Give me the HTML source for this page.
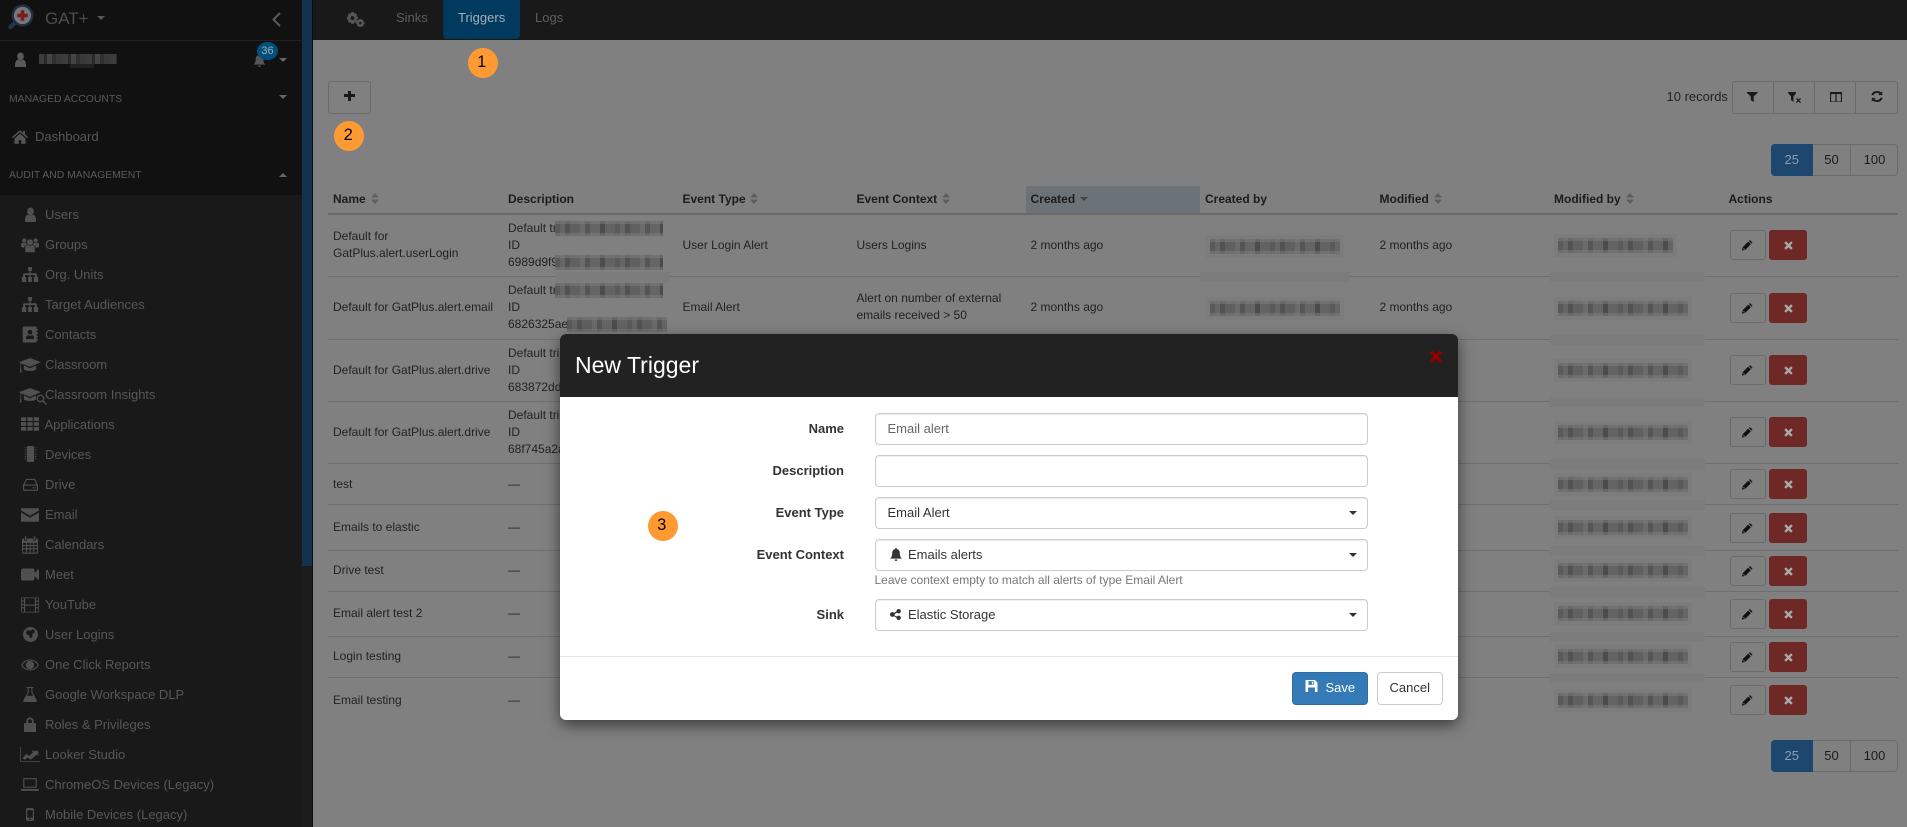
<!DOCTYPE html>
<html lang="en"><head><meta charset="utf-8"><title>Triggers</title>
<style>
*{box-sizing:border-box}
html,body{margin:0;padding:0;width:1907px;height:827px;overflow:hidden;background:#808080;font-family:"Liberation Sans",Arial,sans-serif;font-size:13px;color:#222}
.a,.t{position:absolute}
.t{white-space:nowrap;line-height:16px;height:16px}
svg{position:absolute;display:block}
.nav{left:45px;color:#575757}
.sec{left:9px;color:#5a5a5a;font-size:10.4px}
.th{top:191px;font-weight:bold;color:#1c1c1c;font-size:12px}
.c{color:#222;font-size:12px}
.ctrl{position:absolute;left:874.5px;width:493px;height:32px;background:#fff;border:1px solid #ccc;border-radius:4px;box-shadow:inset 0 1px 1px rgba(0,0,0,.075)}
.lb{right:1063px;font-weight:bold;color:#333}
.ft{left:887.5px;color:#333}
.car{position:absolute;width:0;height:0;border-left:4px solid transparent;border-right:4px solid transparent;border-top:4px solid #333}
.btn{position:absolute;border:1px solid #6a6a6a;border-radius:3px}
.ed{left:1729.5px;width:36.5px;height:30px}
.dl{left:1769px;width:38px;height:30px;background:#6e2927;border-radius:3px;position:absolute}
.o{position:absolute;width:30px;height:30px;border-radius:50%;background:#ff9a33;color:#000;font-size:16.5px;line-height:29px;text-align:center;padding-right:1.5px}
.bl{position:absolute;height:15px;box-shadow:0 0 0 4px #7c7c7c;background:linear-gradient(180deg,rgba(124,124,124,.55) 0 3px,transparent 3px 12px,rgba(124,124,124,.55) 12px),repeating-linear-gradient(90deg,#5a5a5a 0 5px,#666 5px 10px,#525252 10px 15px,#606060 15px 25px,#6b6b6b 25px 30px,#555 30px 35px,#656565 35px 45px,#4c4c4c 45px 50px,#636363 50px 60px)}
.ln{position:absolute;left:328px;width:1570px;height:1px;background:#6e6e6e}
.pt{position:absolute;background:#7c7c7c;height:10px}
.pg{position:absolute;border:1px solid #6a6a6a;border-radius:4px;left:1771px;width:127px;height:32px;color:#1c1c1c}
.pg i{position:absolute;top:0;height:30px;line-height:29px;text-align:center;font-style:normal}
</style></head>
<body>
<svg width="0" height="0" style="position:absolute"><defs>
<symbol id="user" viewBox="0 0 24 24" preserveAspectRatio="none"><circle cx="12" cy="7" r="6.2"/><path d="M2 24q-1-11 6-12 4 3 8 0 7 1 6 12 0 0-20 0z"/></symbol>
<symbol id="users" viewBox="0 0 30 24"><circle cx="15" cy="7.5" r="5"/><circle cx="5.5" cy="4.5" r="3.5"/><circle cx="24.5" cy="4.5" r="3.5"/><path d="M7 24v-7q0-5 4-5 4 3 8 0 4 0 4 5v7z"/><path d="M0 15v-4q0-3 3-3 3 2 5 0 1 0 1 0 0 3 2 3-5 1-6 6zM30 15v-4q0-3-3-3-3 2-5 0h-1q0 3-2 3 5 1 6 6z"/></symbol>
<symbol id="home" viewBox="0 0 26 22"><path d="M13 0 0 11l1.500 1.800L13 3l11.500 9.800L26 11l-5-4.300V1h-3v3zM4 13.500V22h7v-6h4v6h7v-8.500L13 5.500z"/></symbol>
<symbol id="site" viewBox="0 0 26 24"><path d="M10 0h6v6h-2v4h8q2 0 2 2v4h2v8h-7v-8h2v-3h-7v3h2v8h-6v-8h2v-3H5v3h2v8H0v-8h2v-4q0-2 2-2h8V6h-2z"/></symbol>
<symbol id="contact" viewBox="0 0 24 24"><path fill-rule="evenodd" d="M3 0h17q2 0 2 2v2h2v2h-2v3h2v2h-2v3h2v2h-2v3h2v2h-2v1q0 2-2 2H3q-2 0-2-2V2q0-2 2-2zM12 5a3.500 3.500 0 1 0 .01 0zM6 19h12v-2q0-3-3-4-3 2-6 0-3 1-3 4z"/></symbol>
<symbol id="cap" viewBox="0 0 32 22"><path d="M16 0 0 6l2 1v8l-1 6h3l-1-6V8l13 5 16-7z"/><path d="M7 11v5q0 3 9 3t9-3v-5l-9 4z"/></symbol>
<symbol id="th" viewBox="0 0 24 18"><path d="M0 1q0-1 1-1h5q1 0 1 1v4H0zM8.500 0h7v5h-7zM17 0h6q1 0 1 1v4h-7zM0 6.500h7v5H0zM8.500 6.500h7v5h-7zM17 6.500h7v5h-7zM0 13h7v5H1q-1 0-1-1zM8.500 13h7v5h-7zM17 13h7v4q0 1-1 1h-6z"/></symbol>
<symbol id="chip" viewBox="0 0 16 22"><rect x="3" y="0" width="10" height="22" rx="1.500"/><path d="M0 2h2v1H0zM0 5h2v1H0zM0 8h2v1H0zM0 11h2v1H0zM0 14h2v1H0zM0 17h2v1H0zM14 2h2v1h-2zM14 5h2v1h-2zM14 8h2v1h-2zM14 11h2v1h-2zM14 14h2v1h-2zM14 17h2v1h-2z"/></symbol>
<symbol id="hdd" viewBox="0 0 20 17"><path fill-rule="evenodd" d="M4 1h12l4 8v6q0 2-2 2H2q-2 0-2-2V9zM5 2.500 2 8.500h16l-3-6zM1.500 10v4.500q0 1 1 1h15q1 0 1-1V10zM13 12h1.500v1.500H13zM15.500 12H17v1.500h-1.500z"/></symbol>
<symbol id="mail" viewBox="0 0 24 18"><path d="M1 0h22q1 0 1 1v2L12 10 0 3V1q0-1 1-1zM0 5.500l12 7 12-7V17q0 1-1 1H1q-1 0-1-1z"/></symbol>
<symbol id="cal" viewBox="0 0 22 24"><path fill-rule="evenodd" d="M4 0h2v5H4zM16 0h2v5h-2zM2 3h1v3h4V3h8v3h4V3h1q2 0 2 2v17q0 2-2 2H2q-2 0-2-2V5q0-2 2-2zM1.500 9v3h4V9zM7 9v3h3.500V9zM12 9v3h3.500V9zM17 9v3h3.500V9zM1.500 13.500v3h4v-3zM7 13.500v3h3.500v-3zM12 13.500v3h3.500v-3zM17 13.500v3h3.500v-3zM1.500 18v4.500h4V18zM7 18v4.500h3.500V18zM12 18v4.500h3.500V18zM17 18v4.500h3.500V18z"/></symbol>
<symbol id="cam" viewBox="0 0 24 16"><path d="M3 0h12q3 0 3 3v3l5-5q1 0 1 1v12q0 1-1 1l-5-5v3q0 3-3 3H3q-3 0-3-3V3q0-3 3-3z"/></symbol>
<symbol id="film" viewBox="0 0 24 20"><path fill-rule="evenodd" d="M1 0h22q1 0 1 1v18q0 1-1 1H1q-1 0-1-1V1q0-1 1-1zM1 1v3h3V1zM1 5.500v3h3v-3zM1 10v3h3v-3zM1 14.500V19h3v-4.500zM20 1v3h3V1zM20 5.500v3h3v-3zM20 10v3h3v-3zM20 14.500V19h3v-4.500zM5.500 1v8.500h13V1zM5.500 11v8h13v-8z"/></symbol>
<symbol id="globe" viewBox="0 0 20 20"><path fill-rule="evenodd" d="M10 0a10 10 0 1 0 .01 0zM6 4l3 1 4-2 3 2-1 3-3 1 1 3-2 3-2-1-1-3-3-1-1-3z"/></symbol>
<symbol id="eye" viewBox="0 0 26 16"><path fill-rule="evenodd" d="M13 0Q22 0 26 8 22 16 13 16 4 16 0 8 4 0 13 0zM13 2a6 6 0 1 0 .01 0zM13 1.500Q6 1.500 1.800 8 6 14.500 13 14.500 20 14.500 24.200 8 20 1.500 13 1.500z"/><path d="M13 3.500a4.500 4.500 0 1 0 4.500 4.500H13z"/></symbol>
<symbol id="flask" viewBox="0 0 20 22"><path fill-rule="evenodd" d="M5 0h10v1.500h-1.500V8L20 20q0 2-2 2H2q-2 0-2-2L6.500 8V1.500H5zM8 1.500V8.500L5.500 13h9L12 8.500V1.500z"/></symbol>
<symbol id="lock" viewBox="0 0 16 20"><path fill-rule="evenodd" d="M3 8V5.500a5 5 0 0 1 10 0V8h2q1 0 1 1v10q0 1-1 1H1q-1 0-1-1V9q0-1 1-1zM5.500 8h5V5.500a2.500 2.500 0 0 0-5 0z"/></symbol>
<symbol id="chart" viewBox="0 0 26 20"><path d="M0 0h1v19h25v1H0z"/><path d="M3 15l5-6 4 3 5-5-2-2h9v7l-2-2-8 7-4-3-4 3z"/></symbol>
<symbol id="lap" viewBox="0 0 24 17"><path fill-rule="evenodd" d="M4 0h16q1 0 1 1v12H3V1q0-1 1-1zM4.500 1.500v10h15v-10zM0 14.500h24V15q0 2-2 2H2q-2 0-2-2z"/></symbol>
<symbol id="mob" viewBox="0 0 10 16"><path fill-rule="evenodd" d="M2 0h6q2 0 2 2v12q0 2-2 2H2q-2 0-2-2V2q0-2 2-2zM1.500 2.500v9.500h7V2.500zM4 13v1.500h2V13z"/></symbol>
<symbol id="bell" viewBox="0 0 20 22"><path d="M10 0q1.500 0 1.500 2 5 1 5 7 0 6 3.500 9H0q3.500-3 3.500-9 0-6 5-7Q8.500 0 10 0zM7.500 19.500h5q0 2.500-2.500 2.500t-2.500-2.500z"/></symbol>
<symbol id="cogs" viewBox="0 0 30 24"><path fill-rule="evenodd" d="M9 0h4l.6 2.500 2-.8 2.800 2.800-1.200 2.200 2.400 1v4l-2.400.8 1.200 2.200-2.800 2.800-2-1.200-.6 2.700H9l-.8-2.700-2 1.200-2.800-2.800 1.200-2.200L2 11.700v-4l2.600-1-1.200-2.200 2.800-2.800 2 .8zM11 6.500a3.200 3.200 0 1 0 .01 0z"/><path fill-rule="evenodd" d="M22 11h3l.4 1.700 1.600-.6 2 2-.9 1.500 1.900.6v3l-1.900.6.900 1.500-2 2-1.600-.9-.4 1.600h-3l-.5-1.600-1.500.9-2-2 .9-1.500-1.900-.6v-3l1.900-.6-.9-1.500 2-2 1.500.6zM23.500 15.700a2 2 0 1 0 .01 0z"/></symbol>
<symbol id="filter" viewBox="0 0 14 16" preserveAspectRatio="none"><path d="M0 0h14v1.500L9 7v9l-4-3V7L0 1.500z"/></symbol>
<symbol id="col" viewBox="0 0 16 16" preserveAspectRatio="none"><path fill-rule="evenodd" d="M1 0h14q1 0 1 1v14q0 1-1 1H1q-1 0-1-1V1q0-1 1-1zM1.500 3v11.500h5.700V3zM8.800 3v11.500h5.700V3z"/></symbol>
<symbol id="ref" viewBox="0 0 16 16" preserveAspectRatio="none"><path d="M8 0q3.300 0 5.500 2L15 .500V6h-5.500l1.800-1.800Q9.800 2.800 8 2.800 4.500 2.800 3.300 6.300L.5 6Q2 0 8 0zM1 10h5.500l-1.800 1.800q1.500 1.400 3.300 1.400 3.500 0 4.700-3.500l2.800.3Q14 16 8 16q-3.300 0-5.500-2L1 15.500z"/></symbol>
<symbol id="pen" viewBox="0 0 16 16"><path d="M12 0l4 4-1.500 1.500-4-4zM9.500 2.500l4 4L5 15H4v-2H2v-1H1v-1zM0.500 12 0 16l4-.5z"/></symbol>
<symbol id="x" viewBox="0 0 16 16"><path d="M3.500 0.500 8 5l4.500-4.500 3 3L11 8l4.500 4.500-3 3L8 11l-4.500 4.500-3-3L5 8 .5 3.500z"/></symbol>
<symbol id="sv" viewBox="0 0 16 16"><path fill-rule="evenodd" d="M1 0h11.500L16 3.500V15q0 1-1 1H1q-1 0-1-1V1q0-1 1-1zM4 1.500v5h7.500v-5zM8.500 2.200h2v3.500h-2zM3.500 10v6h9v-6z"/></symbol>
<symbol id="share" viewBox="0 0 14 14"><circle cx="11" cy="2.800" r="2.800"/><circle cx="11" cy="11.200" r="2.800"/><circle cx="3" cy="7" r="3"/><path d="M3 6 10 2l1 1.500L4 7.500l7 3-1 1.500L3 8z"/></symbol>
</defs></svg>

<!-- sidebar -->
<div class="a" style="left:0;top:0;width:302px;height:195px;background:#111"></div>
<div class="a" style="left:0;top:195px;width:302px;height:632px;background:#191919"></div>
<div class="a" style="left:0;top:40px;width:302px;height:1px;background:#222"></div>
<div class="a" style="left:302px;top:0;width:10px;height:566px;background:#14314f"></div>
<div class="a" style="left:302px;top:566px;width:10px;height:261px;background:#1c1c1c"></div>
<div class="a" style="left:312px;top:0;width:1px;height:827px;background:#0c0c0c"></div>

<svg style="left:8px;top:4px" width="27" height="26" viewBox="0 0 27 26"><path d="M8 18 2.500 23" stroke="#20344a" stroke-width="4.500" stroke-linecap="round"/><circle cx="14.500" cy="11.500" r="9.800" fill="#777" stroke="#1d3048" stroke-width="2.400"/><path d="M12.700 6.200h3.600v3.500h3.500v3.600h-3.500v3.500h-3.600v-3.500H9.200V9.700h3.500z" fill="#7a1a22"/></svg>
<div class="t" style="left:45px;top:9px;font-size:17px;line-height:20px;height:20px;color:#4d4d4d">GAT+</div>
<div class="car" style="left:97px;top:16px;border-top-color:#555"></div>
<svg style="left:272px;top:12px" width="9" height="15" viewBox="0 0 9 15"><path d="M8 1 1.500 7.500 8 14" fill="none" stroke="#5a5a5a" stroke-width="2"/></svg>
<svg style="left:14px;top:52px;fill:#5a5a5a" width="13" height="15"><use href="#user"/></svg>
<div class="a" style="left:39px;top:54px;width:78px;height:10px;background:repeating-linear-gradient(90deg,#3c3c3c 0 5px,#2a2a2a 5px 8px,#444 8px 13px,#303030 13px 17px,#3a3a3a 17px 24px)"></div>
<div class="a" style="left:70px;top:64px;width:24px;height:4px;background:#222"></div>
<svg style="left:253px;top:54px;fill:#555" width="13" height="13"><use href="#bell"/></svg>
<div class="a" style="left:257px;top:42px;width:21px;height:18px;border-radius:50%;background:#00507f;color:#a9a9a9;font-size:11px;line-height:18px;text-align:center">36</div>
<div class="car" style="left:279px;top:58px;border-top-color:#666"></div>
<div class="t sec" style="top:92px">MANAGED ACCOUNTS</div>
<div class="car" style="left:279px;top:95px;border-top-color:#666"></div>
<svg style="left:12px;top:130px;fill:#555" width="16" height="14"><use href="#home"/></svg>
<div class="t nav" style="left:35px;top:129px">Dashboard</div>
<div class="t sec" style="top:168px">AUDIT AND MANAGEMENT</div>
<div class="car" style="left:279px;top:173px;border-top:0;border-bottom:4px solid #666"></div>

<svg style="left:24px;top:207px;fill:#505050" width="13" height="15"><use href="#user"/></svg><div class="t nav" style="top:207px">Users</div>
<svg style="left:21px;top:237px;fill:#505050" width="18" height="16"><use href="#users"/></svg><div class="t nav" style="top:237px">Groups</div>
<svg style="left:21px;top:267px;fill:#505050" width="18" height="15"><use href="#site"/></svg><div class="t nav" style="top:267px">Org. Units</div>
<svg style="left:21px;top:297px;fill:#505050" width="18" height="15"><use href="#site"/></svg><div class="t nav" style="top:297px">Target Audiences</div>
<svg style="left:22px;top:326px;fill:#505050" width="16" height="17"><use href="#contact"/></svg><div class="t nav" style="top:327px">Contacts</div>
<svg style="left:19px;top:358px;fill:#505050" width="22" height="15"><use href="#cap"/></svg><div class="t nav" style="top:357px">Classroom</div>
<svg style="left:19px;top:388px;fill:#505050" width="22" height="15"><use href="#cap"/></svg>
<svg style="left:36px;top:394px" width="11" height="11" viewBox="0 0 11 11"><circle cx="4.500" cy="4.500" r="3.200" fill="#191919" stroke="#505050" stroke-width="1.300"/><path d="M7 7l3.500 3.500" stroke="#505050" stroke-width="1.400"/></svg>
<div class="t nav" style="top:387px">Classroom Insights</div>
<svg style="left:21px;top:417px;fill:#505050" width="18" height="14"><use href="#th"/></svg><div class="t nav" style="left:44.500px;top:417px">Applications</div>
<svg style="left:23px;top:446px;fill:#505050" width="15" height="16"><use href="#chip"/></svg><div class="t nav" style="top:447px">Devices</div>
<svg style="left:23px;top:478px;fill:#505050" width="15" height="13"><use href="#hdd"/></svg><div class="t nav" style="top:477px">Drive</div>
<svg style="left:21px;top:508px;fill:#505050" width="18" height="14"><use href="#mail"/></svg><div class="t nav" style="top:507px">Email</div>
<svg style="left:22px;top:536px;fill:#505050" width="16" height="18"><use href="#cal"/></svg><div class="t nav" style="top:537px">Calendars</div>
<svg style="left:21px;top:568px;fill:#505050" width="18" height="13"><use href="#cam"/></svg><div class="t nav" style="top:567px">Meet</div>
<svg style="left:21px;top:597px;fill:#505050" width="18" height="16"><use href="#film"/></svg><div class="t nav" style="top:597px">YouTube</div>
<svg style="left:23px;top:627px;fill:#505050" width="15" height="15"><use href="#globe"/></svg><div class="t nav" style="top:627px">User Logins</div>
<svg style="left:21px;top:659px;fill:#505050" width="18" height="12"><use href="#eye"/></svg><div class="t nav" style="top:657px">One Click Reports</div>
<svg style="left:23px;top:687px;fill:#505050" width="14" height="15"><use href="#flask"/></svg><div class="t nav" style="top:687px">Google Workspace DLP</div>
<svg style="left:24px;top:717px;fill:#505050" width="12" height="15"><use href="#lock"/></svg><div class="t nav" style="top:717px">Roles &amp; Privileges</div>
<svg style="left:20px;top:747px;fill:#505050" width="20" height="15"><use href="#chart"/></svg><div class="t nav" style="top:747px">Looker Studio</div>
<svg style="left:21px;top:778px;fill:#505050" width="18" height="13"><use href="#lap"/></svg><div class="t nav" style="top:777px">ChromeOS Devices (Legacy)</div>
<svg style="left:26px;top:808px;fill:#505050" width="8" height="13"><use href="#mob"/></svg><div class="t nav" style="top:807px">Mobile Devices (Legacy)</div>

<!-- top bar -->
<div class="a" style="left:313px;top:0;width:1594px;height:40px;background:#191919"></div>
<svg style="left:345px;top:12px;fill:#555" width="20" height="15"><use href="#cogs"/></svg>
<div class="t" style="left:396px;top:10px;color:#5f5f5f">Sinks</div>
<div class="a" style="left:443px;top:0;width:77px;height:39px;background:#003a5f;border-radius:0 0 4px 4px"></div>
<div class="t" style="left:458px;top:10px;color:#a3aeb8">Triggers</div>
<div class="t" style="left:535px;top:10px;color:#5f5f5f">Logs</div>

<!-- toolbar -->
<div class="btn" style="left:328px;top:81px;width:43px;height:33px"></div>
<div class="a" style="left:344px;top:94.250px;width:11px;height:2.500px;background:#1a1a1a"></div>
<div class="a" style="left:348.250px;top:90.500px;width:2.500px;height:10px;background:#1a1a1a"></div>
<div class="t" style="left:1666.500px;top:89px;color:#222">10 records</div>
<div class="btn" style="left:1731.500px;top:81px;width:166px;height:33px;border-color:#6a6a6a"></div>
<div class="a" style="left:1773px;top:82px;width:1px;height:31px;background:#6a6a6a"></div>
<div class="a" style="left:1814px;top:82px;width:1px;height:31px;background:#6a6a6a"></div>
<div class="a" style="left:1855px;top:82px;width:1px;height:31px;background:#6a6a6a"></div>
<svg style="left:1747px;top:92px;fill:#1a1a1a" width="10.500" height="10"><use href="#filter"/></svg>
<svg style="left:1787.500px;top:92px;fill:#1a1a1a" width="8.500" height="10"><use href="#filter"/></svg>
<svg style="left:1795.500px;top:97.500px" width="5" height="5" viewBox="0 0 6 6"><path d="M.5.5l5 5M5.500.5l-5 5" stroke="#1a1a1a" stroke-width="1.500"/></svg>
<svg style="left:1829.500px;top:91.500px;fill:#1a1a1a" width="12" height="10.500"><use href="#col"/></svg>
<svg style="left:1870.500px;top:91px;fill:#1a1a1a" width="12" height="11"><use href="#ref"/></svg>

<div class="pg" style="top:144px"><i style="left:-1px;top:-1px;width:41.500px;height:32px;line-height:31px;background:#1d476e;color:#8f9cab;border-radius:4px 0 0 4px">25</i><i style="left:41px;width:38px;border-right:1px solid #6a6a6a">50</i><i style="left:80px;width:45px">100</i></div>
<div class="pg" style="top:740px"><i style="left:-1px;top:-1px;width:41.500px;height:32px;line-height:31px;background:#1d476e;color:#8f9cab;border-radius:4px 0 0 4px">25</i><i style="left:41px;width:38px;border-right:1px solid #6a6a6a">50</i><i style="left:80px;width:45px">100</i></div>

<!-- table header -->
<div class="a" style="left:1026px;top:186px;width:174px;height:27px;background:#6c7378"></div>
<div class="t th" style="left:333px">Name</div>
<div class="t th" style="left:508px">Description</div>
<div class="t th" style="left:682.500px">Event Type</div>
<div class="t th" style="left:856.500px">Event Context</div>
<div class="t th" style="left:1030.500px">Created</div>
<div class="t th" style="left:1205px">Created by</div>
<div class="t th" style="left:1379.500px">Modified</div>
<div class="t th" style="left:1554px">Modified by</div>
<div class="t th" style="left:1728.500px">Actions</div>
<svg style="left:371px;top:193px;fill:#5e5e5e" width="8" height="11" viewBox="0 0 8 11"><path d="M4 0l4 4.500H0zM4 11l4-4.500H0z"/></svg>
<svg style="left:750px;top:193px;fill:#5e5e5e" width="8" height="11" viewBox="0 0 8 11"><path d="M4 0l4 4.500H0zM4 11l4-4.500H0z"/></svg>
<svg style="left:942px;top:193px;fill:#5e5e5e" width="8" height="11" viewBox="0 0 8 11"><path d="M4 0l4 4.500H0zM4 11l4-4.500H0z"/></svg>
<svg style="left:1434px;top:193px;fill:#5e5e5e" width="8" height="11" viewBox="0 0 8 11"><path d="M4 0l4 4.500H0zM4 11l4-4.500H0z"/></svg>
<svg style="left:1626px;top:193px;fill:#5e5e5e" width="8" height="11" viewBox="0 0 8 11"><path d="M4 0l4 4.500H0zM4 11l4-4.500H0z"/></svg>
<div class="car" style="left:1080px;top:197px;border-top-color:#444"></div>
<div class="a" style="left:328px;top:213px;width:1570px;height:2px;background:#6a6a6a"></div>

<!-- row lines -->
<div class="ln" style="top:276px"></div><div class="ln" style="top:339px"></div><div class="ln" style="top:401px"></div><div class="ln" style="top:463px"></div><div class="ln" style="top:504px"></div><div class="ln" style="top:550px"></div><div class="ln" style="top:591px"></div><div class="ln" style="top:636px"></div><div class="ln" style="top:677px"></div>
<div class="pt" style="left:1550px;top:272px;width:155px"></div><div class="pt" style="left:1550px;top:335px;width:155px"></div><div class="pt" style="left:1550px;top:397px;width:155px"></div><div class="pt" style="left:1550px;top:459px;width:155px"></div><div class="pt" style="left:1550px;top:500px;width:155px"></div><div class="pt" style="left:1550px;top:546px;width:155px"></div><div class="pt" style="left:1550px;top:587px;width:155px"></div><div class="pt" style="left:1550px;top:632px;width:155px"></div><div class="pt" style="left:1550px;top:673px;width:155px"></div>
<div class="pt" style="left:1200px;top:272px;width:150px"></div><div class="pt" style="left:555px;top:272px;width:115px"></div>

<!-- names -->
<div class="t c" style="left:333px;top:228px">Default for</div><div class="t c" style="left:333px;top:245px">GatPlus.alert.userLogin</div>
<div class="t c" style="left:333px;top:299px">Default for GatPlus.alert.email</div>
<div class="t c" style="left:333px;top:362px">Default for GatPlus.alert.drive</div>
<div class="t c" style="left:333px;top:424px">Default for GatPlus.alert.drive</div>
<div class="t c" style="left:333px;top:476px">test</div>
<div class="t c" style="left:333px;top:519px">Emails to elastic</div>
<div class="t c" style="left:333px;top:562px">Drive test</div>
<div class="t c" style="left:333px;top:605px">Email alert test 2</div>
<div class="t c" style="left:333px;top:648px">Login testing</div>
<div class="t c" style="left:333px;top:692px">Email testing</div>

<!-- descriptions -->
<div class="t c" style="left:508px;top:220px">Default tr</div><div class="t c" style="left:508px;top:237px">ID</div><div class="t c" style="left:508px;top:254px">6989d9f9</div>
<div class="bl" style="left:555px;top:221px;width:108px;box-shadow:none"></div><div class="bl" style="left:555px;top:255px;width:108px;box-shadow:none"></div>
<div class="t c" style="left:508px;top:282px">Default tr</div><div class="t c" style="left:508px;top:299px">ID</div><div class="t c" style="left:508px;top:316px">6826325ae</div>
<div class="bl" style="left:555px;top:283px;width:108px;box-shadow:none"></div><div class="bl" style="left:567px;top:317px;width:100px;box-shadow:none"></div>
<div class="t c" style="left:508px;top:345px">Default tri</div><div class="t c" style="left:508px;top:362px">ID</div><div class="t c" style="left:508px;top:379px">683872dd</div>
<div class="t c" style="left:508px;top:407px">Default tri</div><div class="t c" style="left:508px;top:424px">ID</div><div class="t c" style="left:508px;top:441px">68f745a2a</div>
<div class="t c" style="left:508px;top:476px">&mdash;</div><div class="t c" style="left:508px;top:519px">&mdash;</div><div class="t c" style="left:508px;top:562px">&mdash;</div><div class="t c" style="left:508px;top:605px">&mdash;</div><div class="t c" style="left:508px;top:648px">&mdash;</div><div class="t c" style="left:508px;top:692px">&mdash;</div>

<!-- other cells -->
<div class="t c" style="left:682.500px;top:237px">User Login Alert</div>
<div class="t c" style="left:682.500px;top:299px">Email Alert</div>
<div class="t c" style="left:856.500px;top:237px">Users Logins</div>
<div class="t c" style="left:856.500px;top:290px">Alert on number of external</div>
<div class="t c" style="left:856.500px;top:307px">emails received &gt; 50</div>
<div class="t c" style="left:1030.500px;top:237px">2 months ago</div>
<div class="t c" style="left:1030.500px;top:299px">2 months ago</div>
<div class="t c" style="left:1379.500px;top:237px">2 months ago</div>
<div class="t c" style="left:1379.500px;top:299px">2 months ago</div>
<div class="bl" style="left:1210px;top:239px;width:130px"></div>
<div class="bl" style="left:1210px;top:301px;width:130px"></div>
<div class="bl" style="left:1557.500px;top:238px;width:115.500px"></div>
<div class="bl" style="left:1557.500px;top:301px;width:130.500px"></div>
<div class="bl" style="left:1557.500px;top:363px;width:130.500px"></div>
<div class="bl" style="left:1557.500px;top:425px;width:130.500px"></div>
<div class="bl" style="left:1557.500px;top:477px;width:130.500px"></div>
<div class="bl" style="left:1557.500px;top:520px;width:130.500px"></div>
<div class="bl" style="left:1557.500px;top:563px;width:130.500px"></div>
<div class="bl" style="left:1557.500px;top:606px;width:130.500px"></div>
<div class="bl" style="left:1557.500px;top:649px;width:130.500px"></div>
<div class="bl" style="left:1557.500px;top:693px;width:130.500px"></div>

<!-- actions -->
<div class="btn ed" style="top:230px"></div><div class="dl" style="top:230px"></div><svg style="left:1742px;top:240px;fill:#111" width="10.500" height="10.500"><use href="#pen"/></svg><svg style="left:1784px;top:240.500px;fill:#aaa" width="9" height="9"><use href="#x"/></svg>
<div class="btn ed" style="top:293px"></div><div class="dl" style="top:293px"></div><svg style="left:1742px;top:303px;fill:#111" width="10.500" height="10.500"><use href="#pen"/></svg><svg style="left:1784px;top:303.500px;fill:#aaa" width="9" height="9"><use href="#x"/></svg>
<div class="btn ed" style="top:355px"></div><div class="dl" style="top:355px"></div><svg style="left:1742px;top:365px;fill:#111" width="10.500" height="10.500"><use href="#pen"/></svg><svg style="left:1784px;top:365.500px;fill:#aaa" width="9" height="9"><use href="#x"/></svg>
<div class="btn ed" style="top:417px"></div><div class="dl" style="top:417px"></div><svg style="left:1742px;top:427px;fill:#111" width="10.500" height="10.500"><use href="#pen"/></svg><svg style="left:1784px;top:427.500px;fill:#aaa" width="9" height="9"><use href="#x"/></svg>
<div class="btn ed" style="top:469px"></div><div class="dl" style="top:469px"></div><svg style="left:1742px;top:479px;fill:#111" width="10.500" height="10.500"><use href="#pen"/></svg><svg style="left:1784px;top:479.500px;fill:#aaa" width="9" height="9"><use href="#x"/></svg>
<div class="btn ed" style="top:513px"></div><div class="dl" style="top:513px"></div><svg style="left:1742px;top:523px;fill:#111" width="10.500" height="10.500"><use href="#pen"/></svg><svg style="left:1784px;top:523.500px;fill:#aaa" width="9" height="9"><use href="#x"/></svg>
<div class="btn ed" style="top:556px"></div><div class="dl" style="top:556px"></div><svg style="left:1742px;top:566px;fill:#111" width="10.500" height="10.500"><use href="#pen"/></svg><svg style="left:1784px;top:566.500px;fill:#aaa" width="9" height="9"><use href="#x"/></svg>
<div class="btn ed" style="top:599px"></div><div class="dl" style="top:599px"></div><svg style="left:1742px;top:609px;fill:#111" width="10.500" height="10.500"><use href="#pen"/></svg><svg style="left:1784px;top:609.500px;fill:#aaa" width="9" height="9"><use href="#x"/></svg>
<div class="btn ed" style="top:642px"></div><div class="dl" style="top:642px"></div><svg style="left:1742px;top:652px;fill:#111" width="10.500" height="10.500"><use href="#pen"/></svg><svg style="left:1784px;top:652.500px;fill:#aaa" width="9" height="9"><use href="#x"/></svg>
<div class="btn ed" style="top:685px"></div><div class="dl" style="top:685px"></div><svg style="left:1742px;top:695px;fill:#111" width="10.500" height="10.500"><use href="#pen"/></svg><svg style="left:1784px;top:695.500px;fill:#aaa" width="9" height="9"><use href="#x"/></svg>

<!-- modal -->
<div class="a" style="left:560px;top:334px;width:898px;height:386px;background:#fff;border-radius:6px;box-shadow:0 5px 15px rgba(0,0,0,.55)"></div>
<div class="a" style="left:560px;top:334px;width:898px;height:63px;background:#222;border-radius:6px 6px 0 0"></div>
<div class="t" style="left:575px;top:352px;font-size:23px;line-height:26px;height:26px;color:#fff">New Trigger</div>
<svg style="left:1429px;top:350px;fill:#8f0000" width="14" height="13.500"><use href="#x"/></svg>

<div class="t lb" style="top:421px">Name</div>
<div class="t lb" style="top:463px">Description</div>
<div class="t lb" style="top:505px">Event Type</div>
<div class="t lb" style="top:547px">Event Context</div>
<div class="t lb" style="top:607px">Sink</div>
<div class="ctrl" style="top:413px"></div>
<div class="ctrl" style="top:455px"></div>
<div class="ctrl" style="top:497px"></div>
<div class="ctrl" style="top:539px"></div>
<div class="ctrl" style="top:599px"></div>
<div class="t ft" style="top:421px;color:#666">Email alert</div>
<div class="t ft" style="top:505px">Email Alert</div>
<svg style="left:889.500px;top:548px;fill:#333" width="12" height="13"><use href="#bell"/></svg>
<div class="t ft" style="left:908px;top:547px">Emails alerts</div>
<div class="t" style="left:874.500px;top:572px;font-size:12px;color:#777">Leave context empty to match all alerts of type Email Alert</div>
<svg style="left:890px;top:609px;fill:#333" width="11" height="11"><use href="#share"/></svg>
<div class="t ft" style="left:908px;top:607px">Elastic Storage</div>
<div class="car" style="left:1349px;top:511px"></div>
<div class="car" style="left:1349px;top:553px"></div>
<div class="car" style="left:1349px;top:613px"></div>
<div class="a" style="left:560px;top:656px;width:898px;height:1px;background:#e5e5e5"></div>
<div class="a" style="left:1292px;top:672px;width:76px;height:33px;background:#337ab7;border:1px solid #2e6da4;border-radius:4px"></div>
<svg style="left:1304.500px;top:680px;fill:#fff" width="13" height="12"><use href="#sv"/></svg>
<div class="t" style="left:1325.500px;top:680px;color:#fff">Save</div>
<div class="a" style="left:1377px;top:672px;width:65.500px;height:33px;background:#fff;border:1px solid #ccc;border-radius:4px"></div>
<div class="t" style="left:1389.500px;top:680px;color:#333">Cancel</div>

<!-- annotations -->
<div class="o" style="left:467.500px;top:47.500px">1</div>
<div class="o" style="left:334px;top:120.500px">2</div>
<div class="o" style="left:647.500px;top:510.500px">3</div>
</body></html>
